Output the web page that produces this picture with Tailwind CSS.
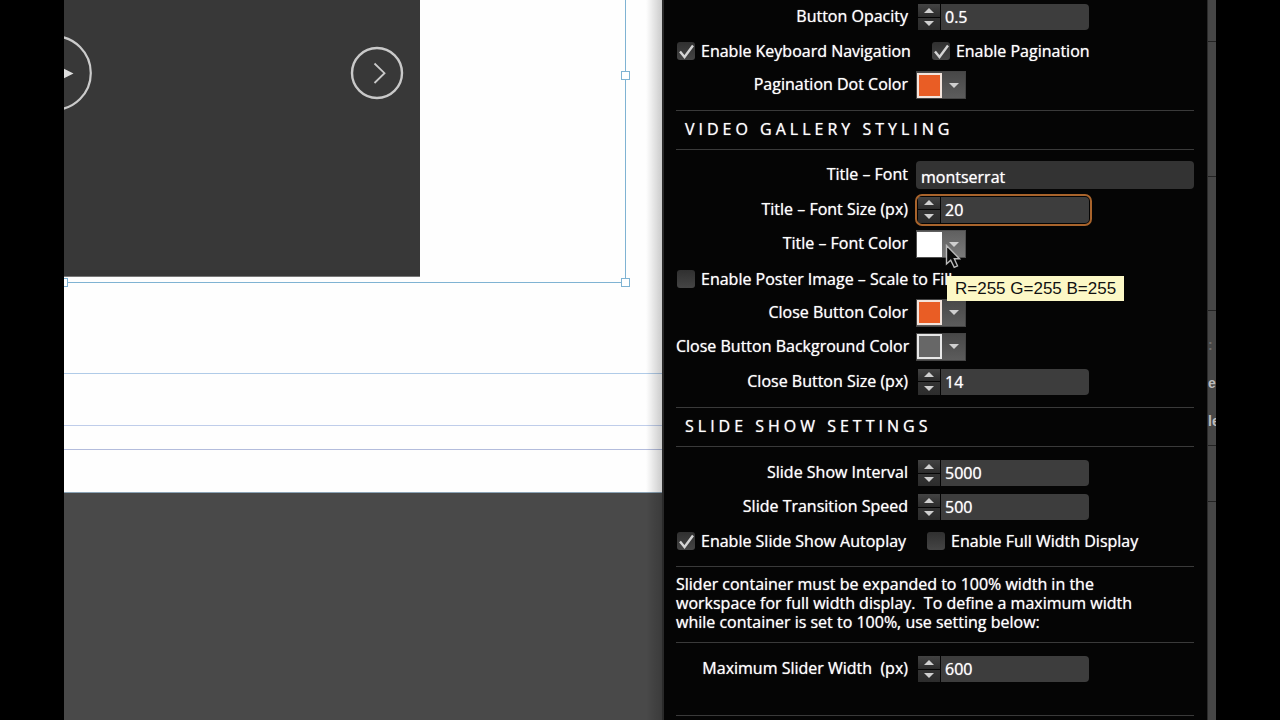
<!DOCTYPE html>
<html lang="en">
<head>
<meta charset="utf-8">
<title>Video Gallery Widget Options</title>
<script src="https://cdn.jsdelivr.net/npm/@tailwindcss/browser@4"></script>
</head>
<body class="flex h-screen overflow-hidden bg-black px-16 font-['Open_Sans',sans-serif] text-[16px] font-medium text-white">

<svg class="hidden">
  <symbol id="up" viewBox="0 0 10 5"><path d="M0 5L5 0L10 5Z" fill="#cfcfcf"/></symbol>
  <symbol id="down" viewBox="0 0 10 5"><path d="M0 0L5 5L10 0Z" fill="#cfcfcf"/></symbol>
  <symbol id="tick" viewBox="0 0 18 18"><path d="M3 9.5L7.5 15L16 3.5" fill="none" stroke="#d4d4d4" stroke-width="2.4"/></symbol>
</svg>

<!-- Design canvas -->
<main class="relative min-w-0 flex-1 overflow-hidden bg-[#494949]">
  <div class="absolute inset-x-0 top-0 h-[493px] border-b border-[#8ba3b5] bg-[#fefefe]">
    <div class="absolute inset-x-0 top-[373px] h-px bg-[#b0cbe8]"></div>
    <div class="absolute inset-x-0 top-[425px] h-px bg-[#bfcdea]"></div>
    <div class="absolute inset-x-0 top-[449px] h-px bg-[#b3bcdc]"></div>
    <div class="absolute top-0 left-0 h-[277px] w-[356px] overflow-hidden border-b border-[#777] bg-[#383838]">
      <button aria-label="Play" class="absolute top-[35px] -left-[48px]">
        <svg class="size-[76px]" viewBox="0 0 76 76"><circle cx="38" cy="38" r="36.8" fill="none" stroke="#cbcbcb" stroke-width="2.2"/><path d="M30 25L57.500 38.500L30 52Z" fill="#dedede"/></svg>
      </button>
      <button aria-label="Next" class="absolute top-[46px] left-[286px]">
        <svg class="size-[54px]" viewBox="0 0 54 54" fill="none" stroke="#c9c9c9"><circle cx="27" cy="27" r="25" stroke-width="2.4"/><path d="M24.500 17.500L34.500 27.200L24.500 37" stroke-width="1.8"/></svg>
      </button>
    </div>
    <div class="absolute top-0 left-0 h-[283px] w-[562px] border-r border-b border-[#7fb3d3]"></div>
    <div class="absolute top-[71px] left-[557px] size-[9px] border border-[#7fb3d3] bg-white"></div>
    <div class="absolute top-[278px] left-[557px] size-[9px] border border-[#7fb3d3] bg-white"></div>
    <div class="absolute top-[278px] -left-[5px] size-[9px] border border-[#7fb3d3] bg-white"></div>
  </div>
  <div class="absolute inset-y-0 right-0 w-4 bg-linear-to-r from-black/0 to-black/20"></div>
</main>

<!-- Options panel -->
<form class="flex w-[545px] shrink-0 flex-col border-l-2 border-[#2a2a2a] bg-[#050505] pr-[13px] pl-3 [text-shadow:0_0_1px_#ffffffcc]">
  <section class="border-b border-[#3a3a3a] pb-2">
    <div class="flex h-[34px] items-center gap-[10px]">
      <label for="opacity" class="w-[232px] pb-0.5 text-right">Button Opacity</label>
      <div class="flex h-[26px] gap-px">
        <div class="flex w-[22px] flex-col gap-px">
          <button type="button" aria-label="Increase" class="flex flex-1 items-center justify-center bg-linear-to-b from-[#434343] to-[#2c2c2c]"><svg class="h-[5px] w-[10px]"><use href="#up"/></svg></button>
          <button type="button" aria-label="Decrease" class="flex flex-1 items-center justify-center bg-linear-to-b from-[#333] to-[#2c2c2c]"><svg class="h-[5px] w-[10px]"><use href="#down"/></svg></button>
        </div>
        <input id="opacity" value="0.5" class="w-[148px] rounded-r-sm bg-[#3d3d3d] px-1 outline-none [text-shadow:inherit]">
      </div>
    </div>
    <div class="flex h-[34px] items-center gap-5">
      <label class="flex items-center gap-[6px] pl-px"><span class="grid"><input type="checkbox" checked class="col-start-1 row-start-1 size-[18px] appearance-none rounded-[3px] bg-linear-to-b from-[#303030] to-[#454545]"><svg class="pointer-events-none col-start-1 row-start-1 size-[18px]"><use href="#tick"/></svg></span>Enable Keyboard Navigation</label>
      <label class="flex items-center gap-[6px] pl-px"><span class="grid"><input type="checkbox" checked class="col-start-1 row-start-1 size-[18px] appearance-none rounded-[3px] bg-linear-to-b from-[#303030] to-[#454545]"><svg class="pointer-events-none col-start-1 row-start-1 size-[18px]"><use href="#tick"/></svg></span>Enable Pagination</label>
    </div>
    <div class="flex h-[34px] items-center gap-2">
      <label for="dot" class="w-[232px] pb-0.5 text-right">Pagination Dot Color</label>
      <button type="button" id="dot" class="flex h-7 w-[50px] items-center border border-[#444] bg-linear-to-b from-[#484848] to-[#5c5c5c]"><span class="size-[25px] border-2 border-[#f3e4dc] bg-[#e95d25]"></span><span class="flex flex-1 justify-center"><svg class="h-[5px] w-[10px]"><use href="#down"/></svg></span></button>
    </div>
  </section>

  <h2 class="flex h-[39px] items-center border-b border-[#3a3a3a] pb-0.5 pl-[9px] tracking-[4px]">VIDEO GALLERY STYLING</h2>
  <section class="border-b border-[#3a3a3a] pt-[7px] pb-2">
    <div class="flex h-[35px] items-center gap-2">
      <label for="font" class="w-[232px] pb-0.5 text-right">Title – Font</label>
      <input id="font" value="montserrat" class="h-7 min-w-0 flex-1 rounded-sm bg-[#333] px-[5px] pt-1 outline-none [text-shadow:inherit]">
    </div>
    <div class="flex h-[35px] items-center gap-[10px]">
      <label for="fsize" class="w-[232px] pb-0.5 text-right">Title – Font Size (px)</label>
      <div class="flex h-[26px] gap-px rounded-sm outline-2 outline-offset-1 outline-[#a9642c]">
        <div class="flex w-[22px] flex-col gap-px">
          <button type="button" aria-label="Increase" class="flex flex-1 items-center justify-center bg-linear-to-b from-[#434343] to-[#2c2c2c]"><svg class="h-[5px] w-[10px]"><use href="#up"/></svg></button>
          <button type="button" aria-label="Decrease" class="flex flex-1 items-center justify-center bg-linear-to-b from-[#333] to-[#2c2c2c]"><svg class="h-[5px] w-[10px]"><use href="#down"/></svg></button>
        </div>
        <input id="fsize" value="20" class="w-[148px] rounded-r-sm bg-[#3d3d3d] px-1 outline-none [text-shadow:inherit]">
      </div>
    </div>
    <div class="relative flex h-[34px] items-center gap-2">
      <label for="fcolor" class="w-[232px] pb-0.5 text-right">Title – Font Color</label>
      <button type="button" id="fcolor" class="flex h-7 w-[50px] items-center border border-[#505050] bg-linear-to-b from-[#606060] to-[#7a7a7a]"><span class="size-[25px] bg-white"></span><span class="flex flex-1 justify-center"><svg class="h-[5px] w-[10px]"><use href="#down"/></svg></span></button>
      <svg class="absolute top-[17px] left-[269px] z-10 h-[25px] w-[16px]" viewBox="0 0 16 25"><path d="M1.500 1.500V20L5.700 16.200L9.200 23.400L12.500 21.800L9.300 14.800H14.500Z" fill="#0a0a0a" stroke="#b9b9b9" stroke-width="1.4"/></svg>
      <div role="tooltip" class="absolute top-[49px] left-[271px] z-10 bg-[#fcf8c6] px-2 font-['Liberation_Sans',sans-serif] text-[17px] leading-[25px] font-normal whitespace-nowrap text-[#111] [text-shadow:none]">R=255 G=255 B=255</div>
    </div>
    <div class="flex h-[35px] items-center">
      <label class="flex items-center gap-[6px] pl-px"><input type="checkbox" class="size-[18px] appearance-none rounded-[3px] bg-linear-to-b from-[#303030] to-[#454545]">Enable Poster Image – Scale to Fill</label>
    </div>
    <div class="flex h-[33px] items-center gap-2">
      <label for="close" class="w-[232px] pb-0.5 text-right">Close Button Color</label>
      <button type="button" id="close" class="flex h-7 w-[50px] items-center border border-[#444] bg-linear-to-b from-[#484848] to-[#5c5c5c]"><span class="size-[25px] border-2 border-[#f3e4dc] bg-[#e95d25]"></span><span class="flex flex-1 justify-center"><svg class="h-[5px] w-[10px]"><use href="#down"/></svg></span></button>
    </div>
    <div class="flex h-[35px] items-center gap-2">
      <label for="closebg" class="w-[232px] pb-0.5 text-right whitespace-nowrap">Close Button Background Color</label>
      <button type="button" id="closebg" class="flex h-7 w-[50px] items-center border border-[#444] bg-linear-to-b from-[#484848] to-[#5c5c5c]"><span class="size-[25px] border-2 border-[#e8e8e8] bg-[#676767]"></span><span class="flex flex-1 justify-center"><svg class="h-[5px] w-[10px]"><use href="#down"/></svg></span></button>
    </div>
    <div class="flex h-[35px] items-center gap-[10px]">
      <label for="closesize" class="w-[232px] pb-0.5 text-right">Close Button Size (px)</label>
      <div class="flex h-[26px] gap-px">
        <div class="flex w-[22px] flex-col gap-px">
          <button type="button" aria-label="Increase" class="flex flex-1 items-center justify-center bg-linear-to-b from-[#434343] to-[#2c2c2c]"><svg class="h-[5px] w-[10px]"><use href="#up"/></svg></button>
          <button type="button" aria-label="Decrease" class="flex flex-1 items-center justify-center bg-linear-to-b from-[#333] to-[#2c2c2c]"><svg class="h-[5px] w-[10px]"><use href="#down"/></svg></button>
        </div>
        <input id="closesize" value="14" class="w-[148px] rounded-r-sm bg-[#3d3d3d] px-1 outline-none [text-shadow:inherit]">
      </div>
    </div>
  </section>

  <h2 class="flex h-[39px] items-center border-b border-[#3a3a3a] pb-0.5 pl-[9px] tracking-[4px]">SLIDE SHOW SETTINGS</h2>
  <section class="border-b border-[#3a3a3a] pt-[9px] pb-2">
    <div class="flex h-[34px] items-center gap-[10px]">
      <label for="interval" class="w-[232px] pb-0.5 text-right">Slide Show Interval</label>
      <div class="flex h-[26px] gap-px">
        <div class="flex w-[22px] flex-col gap-px">
          <button type="button" aria-label="Increase" class="flex flex-1 items-center justify-center bg-linear-to-b from-[#434343] to-[#2c2c2c]"><svg class="h-[5px] w-[10px]"><use href="#up"/></svg></button>
          <button type="button" aria-label="Decrease" class="flex flex-1 items-center justify-center bg-linear-to-b from-[#333] to-[#2c2c2c]"><svg class="h-[5px] w-[10px]"><use href="#down"/></svg></button>
        </div>
        <input id="interval" value="5000" class="w-[148px] rounded-r-sm bg-[#3d3d3d] px-1 outline-none [text-shadow:inherit]">
      </div>
    </div>
    <div class="flex h-[34px] items-center gap-[10px]">
      <label for="speed" class="w-[232px] pb-0.5 text-right">Slide Transition Speed</label>
      <div class="flex h-[26px] gap-px">
        <div class="flex w-[22px] flex-col gap-px">
          <button type="button" aria-label="Increase" class="flex flex-1 items-center justify-center bg-linear-to-b from-[#434343] to-[#2c2c2c]"><svg class="h-[5px] w-[10px]"><use href="#up"/></svg></button>
          <button type="button" aria-label="Decrease" class="flex flex-1 items-center justify-center bg-linear-to-b from-[#333] to-[#2c2c2c]"><svg class="h-[5px] w-[10px]"><use href="#down"/></svg></button>
        </div>
        <input id="speed" value="500" class="w-[148px] rounded-r-sm bg-[#3d3d3d] px-1 outline-none [text-shadow:inherit]">
      </div>
    </div>
    <div class="flex h-[34px] items-center gap-5">
      <label class="flex items-center gap-[6px] pl-px"><span class="grid"><input type="checkbox" checked class="col-start-1 row-start-1 size-[18px] appearance-none rounded-[3px] bg-linear-to-b from-[#303030] to-[#454545]"><svg class="pointer-events-none col-start-1 row-start-1 size-[18px]"><use href="#tick"/></svg></span>Enable Slide Show Autoplay</label>
      <label class="flex items-center gap-[6px] pl-px"><input type="checkbox" class="size-[18px] appearance-none rounded-[3px] bg-linear-to-b from-[#303030] to-[#454545]">Enable Full Width Display</label>
    </div>
  </section>
  <p class="border-b border-[#3a3a3a] pt-2 pb-[10px] leading-[19px] whitespace-nowrap">Slider container must be expanded to 100% width in the<br>workspace for full width display.&nbsp; To define a maximum width<br>while container is set to 100%, use setting below:</p>
  <section class="border-b border-[#3a3a3a] pt-[9px] pb-[29px]">
    <div class="flex h-[34px] items-center gap-[10px]">
      <label for="maxw" class="w-[232px] pb-0.5 text-right">Maximum Slider Width&nbsp; (px)</label>
      <div class="flex h-[26px] gap-px">
        <div class="flex w-[22px] flex-col gap-px">
          <button type="button" aria-label="Increase" class="flex flex-1 items-center justify-center bg-linear-to-b from-[#434343] to-[#2c2c2c]"><svg class="h-[5px] w-[10px]"><use href="#up"/></svg></button>
          <button type="button" aria-label="Decrease" class="flex flex-1 items-center justify-center bg-linear-to-b from-[#333] to-[#2c2c2c]"><svg class="h-[5px] w-[10px]"><use href="#down"/></svg></button>
        </div>
        <input id="maxw" value="600" class="w-[148px] rounded-r-sm bg-[#3d3d3d] px-1 outline-none [text-shadow:inherit]">
      </div>
    </div>
  </section>
</form>

<!-- Edge of the docked panels behind the options panel -->
<aside class="flex w-[9px] shrink-0 flex-col overflow-hidden border-l border-[#2b2b2b] bg-[#464646] font-['Liberation_Sans',sans-serif] text-[14px] font-bold text-[#bcbcbc]">
  <div class="h-[42px] border-b border-[#222]"></div>
  <div class="h-[135px] border-b border-[#222]"></div>
  <div class="h-[134px] border-b border-[#222]"></div>
  <div class="flex h-[135px] flex-col border-b border-[#222] pt-[15px] leading-[38px]">
    <span class="text-[#6c6c6c]">:</span>
    <span>e</span>
    <span>le</span>
  </div>
  <div class="h-[56px] border-b border-[#222]"></div>
</aside>
</body>
</html>
